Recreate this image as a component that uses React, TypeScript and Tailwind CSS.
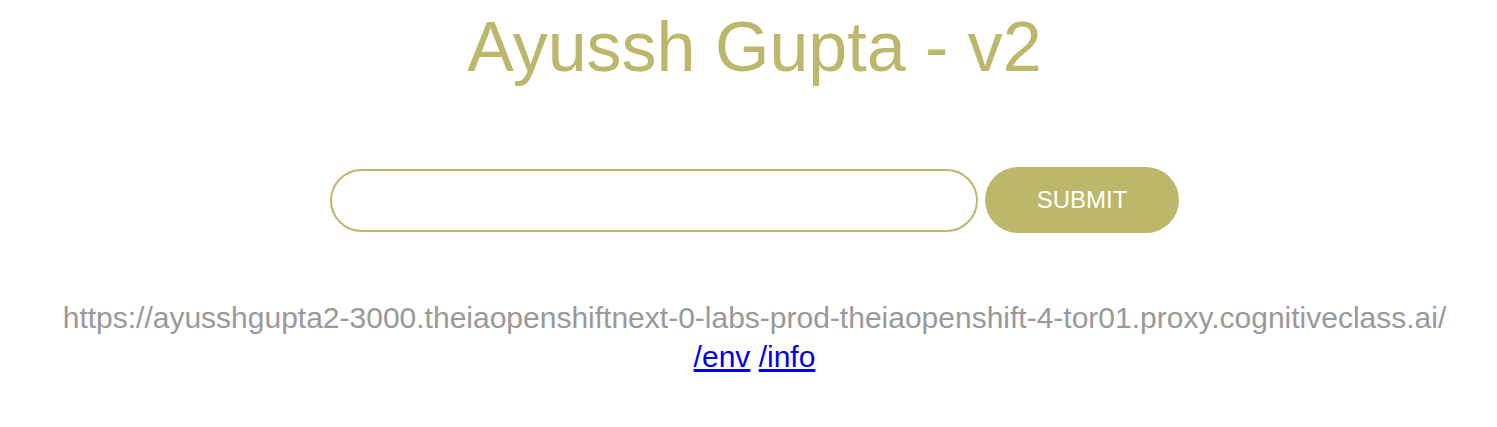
import React from "react";

export default function App() {
	return (
		<div className="min-h-[427px] bg-white pl-[12px] text-center" style={{ fontFamily: '"Liberation Sans", Arial, sans-serif' }}>
			<h1 className="pt-[8px] text-[70px] leading-[78px] text-[#bdb76b]">Ayussh Gupta - v2</h1>

			<form className="mt-[81px] flex items-center justify-center gap-[7px]" onSubmit={(e) => e.preventDefault()}>
				<input
					type="text"
					className="h-[63px] w-[648px] rounded-full border-2 border-[#bdb76b] bg-white px-6 text-[22px] outline-none"
				/>
				<button
					type="submit"
					className="h-[66px] w-[194px] rounded-full bg-[#bdb76b] text-[24px] text-white"
				>
					SUBMIT
				</button>
			</form>

			<div className="mt-[65px] text-[30px] leading-[39px]">
				<div className="text-[#999999]">
					https://ayusshgupta2-3000.theiaopenshiftnext-0-labs-prod-theiaopenshift-4-tor01.proxy.cognitiveclass.ai/
				</div>
				<div>
					<a href="#" className="text-[#0000ee] underline">/env</a>{" "}
					<a href="#" className="text-[#0000ee] underline">/info</a>
				</div>
			</div>
		</div>
	);
}
